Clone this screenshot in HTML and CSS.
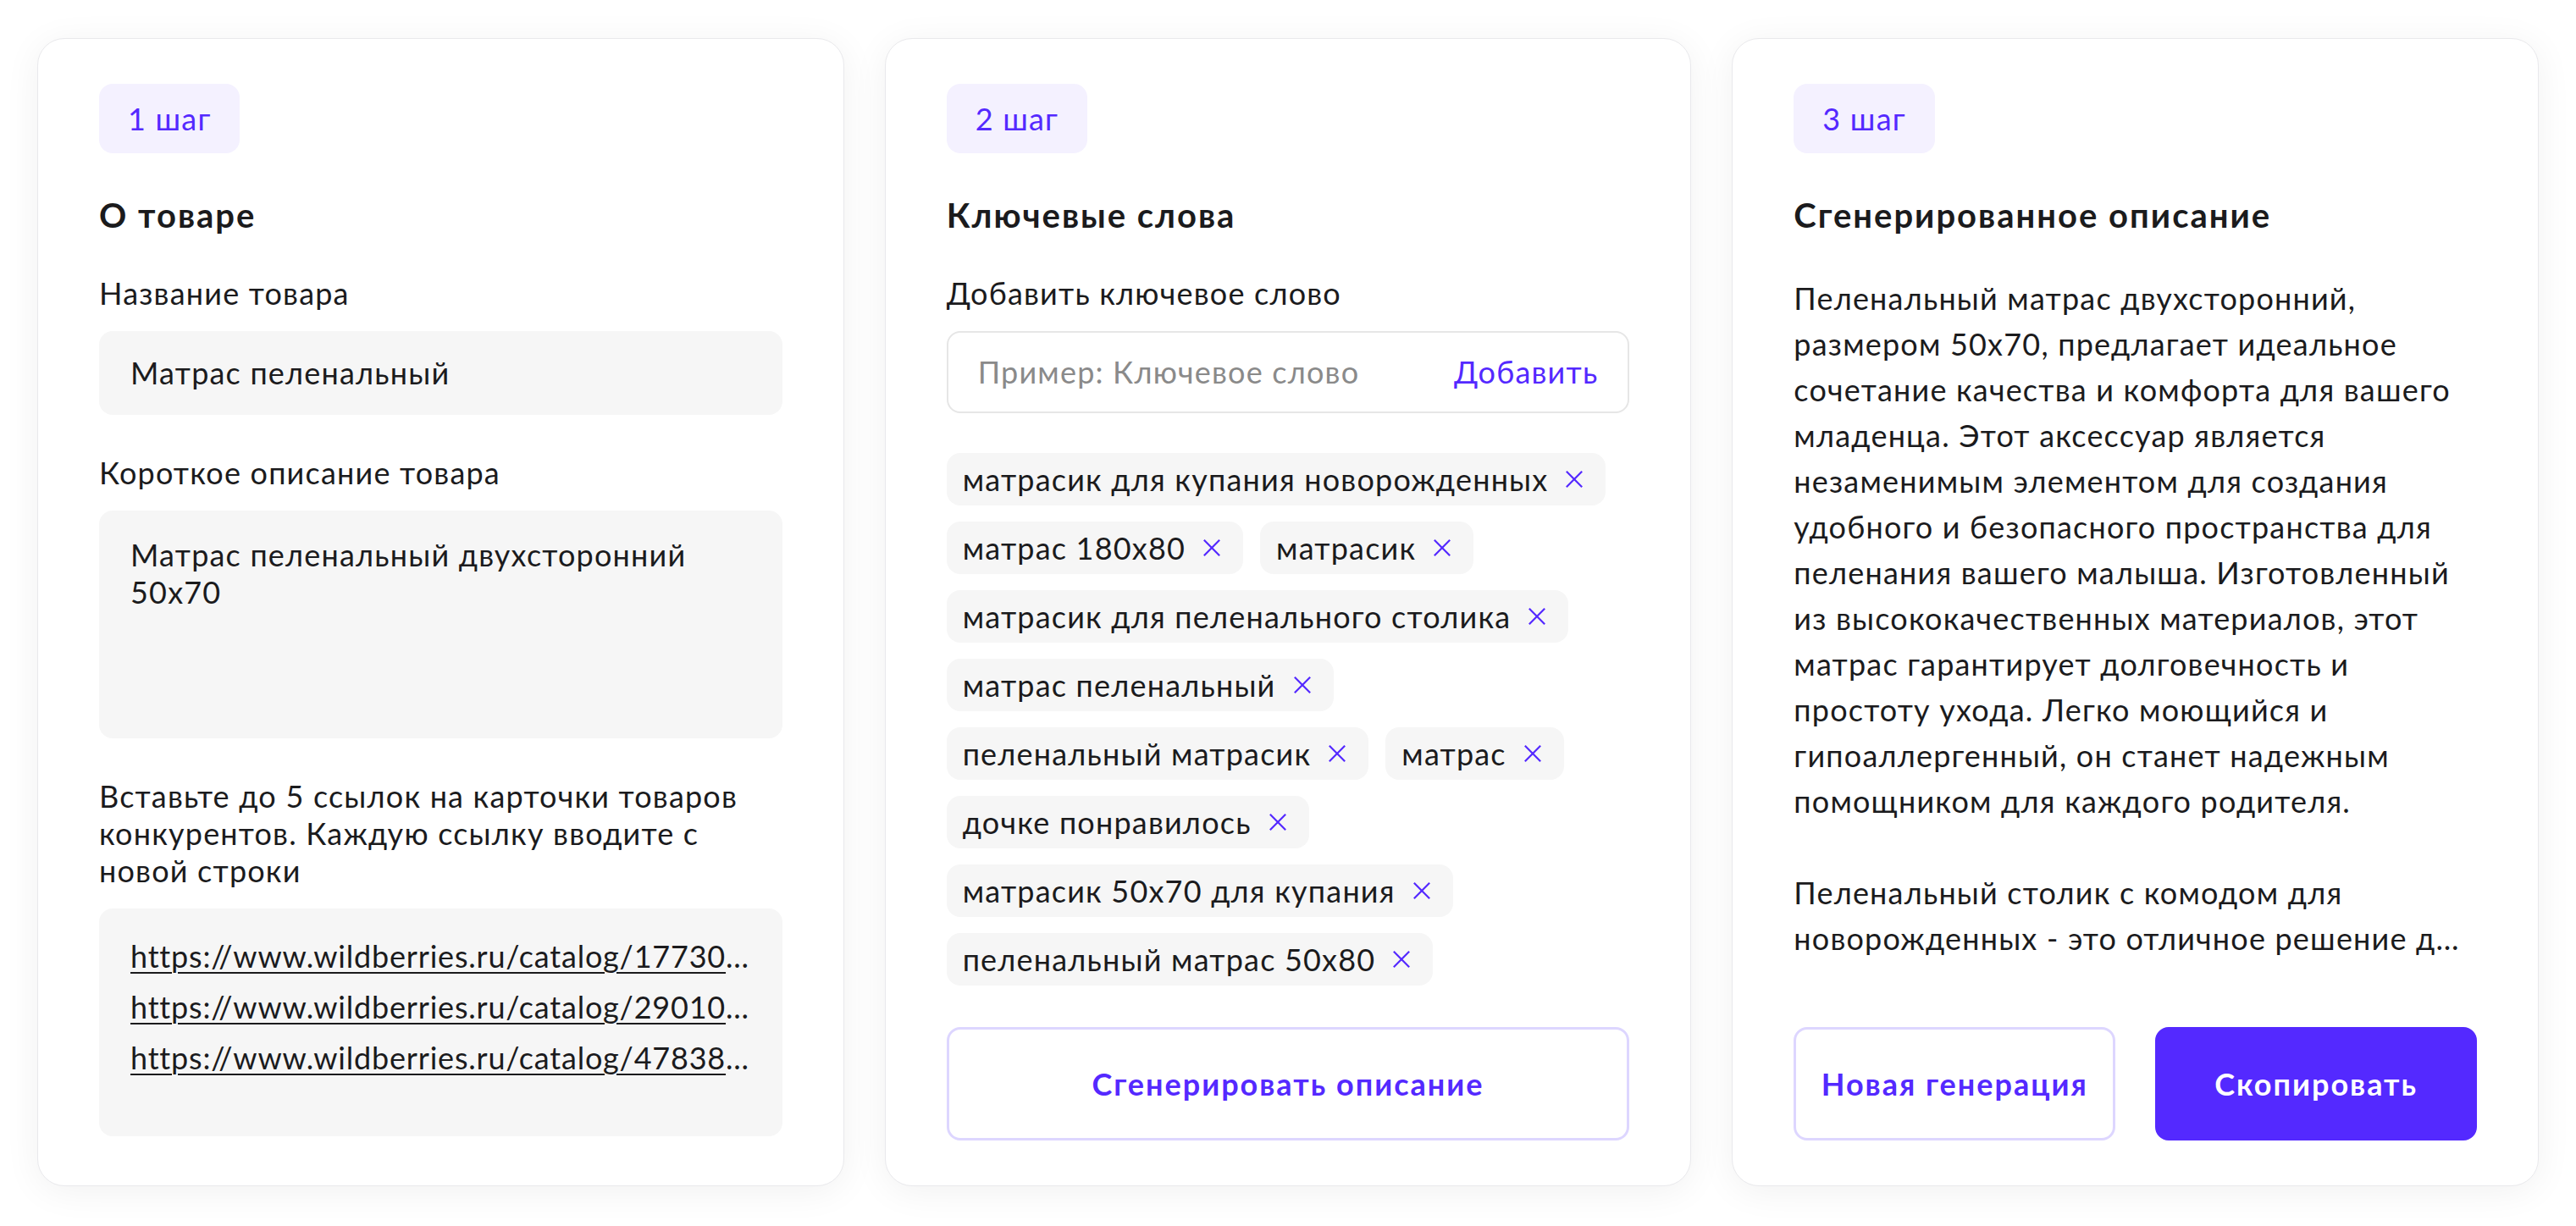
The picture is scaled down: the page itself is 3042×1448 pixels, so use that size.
FILE: index.html
```html
<!DOCTYPE html>
<html lang="ru">
<head>
<meta charset="utf-8">
<title>Генерация описания товара</title>
<link rel="stylesheet" href="styles.css">
</head>
<body>
<main class="steps">
  <section class="card">
    <span class="badge">1 шаг</span>
    <h2 class="card-title">О товаре</h2>
    <label class="field-label">Название товара</label>
    <div class="field">Матрас пеленальный</div>
    <label class="field-label">Короткое описание товара</label>
    <div class="field field-area">Матрас пеленальный двухсторонний 50х70</div>
    <label class="field-label">Вставьте до 5 ссылок на карточки товаров конкурентов. Каждую ссылку вводите с новой строки</label>
    <div class="field field-area field-links">
      <div class="link-row"><a href="#">https://www.wildberries.ru/catalog/177305824/detail.aspx</a></div>
      <div class="link-row"><a href="#">https://www.wildberries.ru/catalog/29010437/detail.aspx</a></div>
      <div class="link-row"><a href="#">https://www.wildberries.ru/catalog/47838120/detail.aspx</a></div>
    </div>
  </section>

  <section class="card">
    <span class="badge">2 шаг</span>
    <h2 class="card-title">Ключевые слова</h2>
    <label class="field-label">Добавить ключевое слово</label>
    <div class="field field-outline">
      <span class="placeholder">Пример: Ключевое слово</span>
      <span class="add-link">Добавить</span>
    </div>
    <div class="chips">
      <span class="chip">матрасик для купания новорожденных<svg class="chip-x" viewBox="0 0 24 24"><path d="M2 2L22 22M22 2L2 22"/></svg></span>
      <span class="chip">матрас 180х80<svg class="chip-x" viewBox="0 0 24 24"><path d="M2 2L22 22M22 2L2 22"/></svg></span>
      <span class="chip">матрасик<svg class="chip-x" viewBox="0 0 24 24"><path d="M2 2L22 22M22 2L2 22"/></svg></span>
      <span class="chip">матрасик для пеленального столика<svg class="chip-x" viewBox="0 0 24 24"><path d="M2 2L22 22M22 2L2 22"/></svg></span>
      <span class="chip">матрас пеленальный<svg class="chip-x" viewBox="0 0 24 24"><path d="M2 2L22 22M22 2L2 22"/></svg></span>
      <span class="chip">пеленальный матрасик<svg class="chip-x" viewBox="0 0 24 24"><path d="M2 2L22 22M22 2L2 22"/></svg></span>
      <span class="chip">матрас<svg class="chip-x" viewBox="0 0 24 24"><path d="M2 2L22 22M22 2L2 22"/></svg></span>
      <span class="chip">дочке понравилось<svg class="chip-x" viewBox="0 0 24 24"><path d="M2 2L22 22M22 2L2 22"/></svg></span>
      <span class="chip">матрасик 50х70 для купания<svg class="chip-x" viewBox="0 0 24 24"><path d="M2 2L22 22M22 2L2 22"/></svg></span>
      <span class="chip">пеленальный матрас 50х80<svg class="chip-x" viewBox="0 0 24 24"><path d="M2 2L22 22M22 2L2 22"/></svg></span>
      <span class="chip">матрас для новорожденных<svg class="chip-x" viewBox="0 0 24 24"><path d="M2 2L22 22M22 2L2 22"/></svg></span>
    </div>
    <button class="btn btn-outline btn-wide" type="button">Сгенерировать описание</button>
  </section>

  <section class="card">
    <span class="badge">3 шаг</span>
    <h2 class="card-title">Сгенерированное описание</h2>
    <p class="result">Пеленальный матрас двухсторонний, размером 50х70, предлагает идеальное сочетание качества и комфорта для вашего младенца. Этот аксессуар является незаменимым элементом для создания удобного и безопасного пространства для пеленания вашего малыша. Изготовленный из высококачественных материалов, этот матрас гарантирует долговечность и простоту ухода. Легко моющийся и гипоаллергенный, он станет надежным помощником для каждого родителя.<br><br>Пеленальный столик с комодом для новорожденных - это отличное решение для родителей, которые хотят создать удобное место для ухода за малышом.</p>
    <div class="actions">
      <button class="btn btn-outline" type="button">Новая генерация</button>
      <button class="btn btn-primary" type="button">Скопировать</button>
    </div>
  </section>
</main>
</body>
</html>
```

FILE: styles.css
```css
html, body {
  margin: 0;
  background: #ffffff;
}

body {
  font-family: Lato, "Noto Sans", sans-serif;
  color: #1b1b1d;
  letter-spacing: 1.2px;
}

.steps {
  box-sizing: border-box;
  height: 100vh;
  padding: 45px 44px 47px;
  display: grid;
  grid-template-columns: repeat(3, 1fr);
  gap: 48px;
}

.card {
  min-width: 0;
  background: #ffffff;
  border: 1px solid #e9e9ec;
  border-radius: 32px;
  box-shadow: 0 6px 44px rgba(0, 0, 0, 0.06);
  padding: 53px 72px 53px;
  display: flex;
  flex-direction: column;
  align-items: flex-start;
}

.badge {
  height: 82px;
  box-sizing: border-box;
  padding: 0 34px;
  display: inline-flex;
  align-items: center;
  background: #f4f1ff;
  color: #5429ff;
  border-radius: 16px;
  font-size: 36px;
}

.card-title {
  margin: 49px 0 0;
  font-size: 40px;
  line-height: 48px;
  font-weight: 700;
  letter-spacing: 2px;
}

.field-label {
  display: block;
  margin-top: 46px;
  font-size: 36px;
  line-height: 44px;
}

.field {
  align-self: stretch;
  margin-top: 23px;
  box-sizing: border-box;
  background: #f6f6f6;
  border-radius: 16px;
  padding: 27px 37px;
  font-size: 36px;
  line-height: 45px;
}

.field-area {
  height: 269px;
  padding-top: 30px;
  line-height: 44px;
}

.field-links {
  padding-top: 34px;
  letter-spacing: 0.8px;
}

.link-row {
  overflow: hidden;
  white-space: nowrap;
  text-overflow: ellipsis;
  margin-bottom: 16px;
}

.link-row a {
  color: #1b1b1d;
  text-decoration: underline;
  text-underline-offset: 5px;
  text-decoration-thickness: 2px;
}

.field-outline {
  background: #ffffff;
  border: 2px solid #e6e6e6;
  padding: 24px 35px;
  display: flex;
  justify-content: space-between;
  align-items: center;
}

.placeholder {
  color: #8a8a8a;
}

.add-link {
  color: #5429ff;
}

.chips {
  align-self: stretch;
  margin-top: 47px;
  height: 629px;
  overflow: hidden;
  display: flex;
  flex-wrap: wrap;
  align-content: flex-start;
  gap: 19px 20px;
}

.chip {
  box-sizing: border-box;
  height: 62px;
  padding: 0 25px 0 19px;
  display: inline-flex;
  align-items: center;
  gap: 19px;
  background: #f6f6f6;
  border-radius: 16px;
  font-size: 36px;
  line-height: 44px;
  white-space: nowrap;
}

.chip-x {
  width: 24px;
  height: 22px;
  flex: none;
  fill: none;
  stroke: #5429ff;
  stroke-width: 2.4;
}

.btn {
  box-sizing: border-box;
  height: 134px;
  border-radius: 16px;
  font-family: inherit;
  font-size: 36px;
  font-weight: 700;
  letter-spacing: 2px;
  display: flex;
  align-items: center;
  justify-content: center;
  cursor: pointer;
}

.btn-outline {
  background: #ffffff;
  border: 3px solid #ddd6ff;
  color: #5429ff;
}

.btn-primary {
  background: #5429ff;
  border: 3px solid #5429ff;
  color: #ffffff;
}

.btn-wide {
  align-self: stretch;
  margin-top: auto;
}

.result {
  margin: 47px 0 0;
  font-size: 36px;
  line-height: 54px;
  display: -webkit-box;
  -webkit-box-orient: vertical;
  -webkit-line-clamp: 15;
  overflow: hidden;
}

.actions {
  align-self: stretch;
  margin-top: auto;
  display: flex;
  gap: 47px;
}

.actions .btn {
  flex: 1;
}
```
